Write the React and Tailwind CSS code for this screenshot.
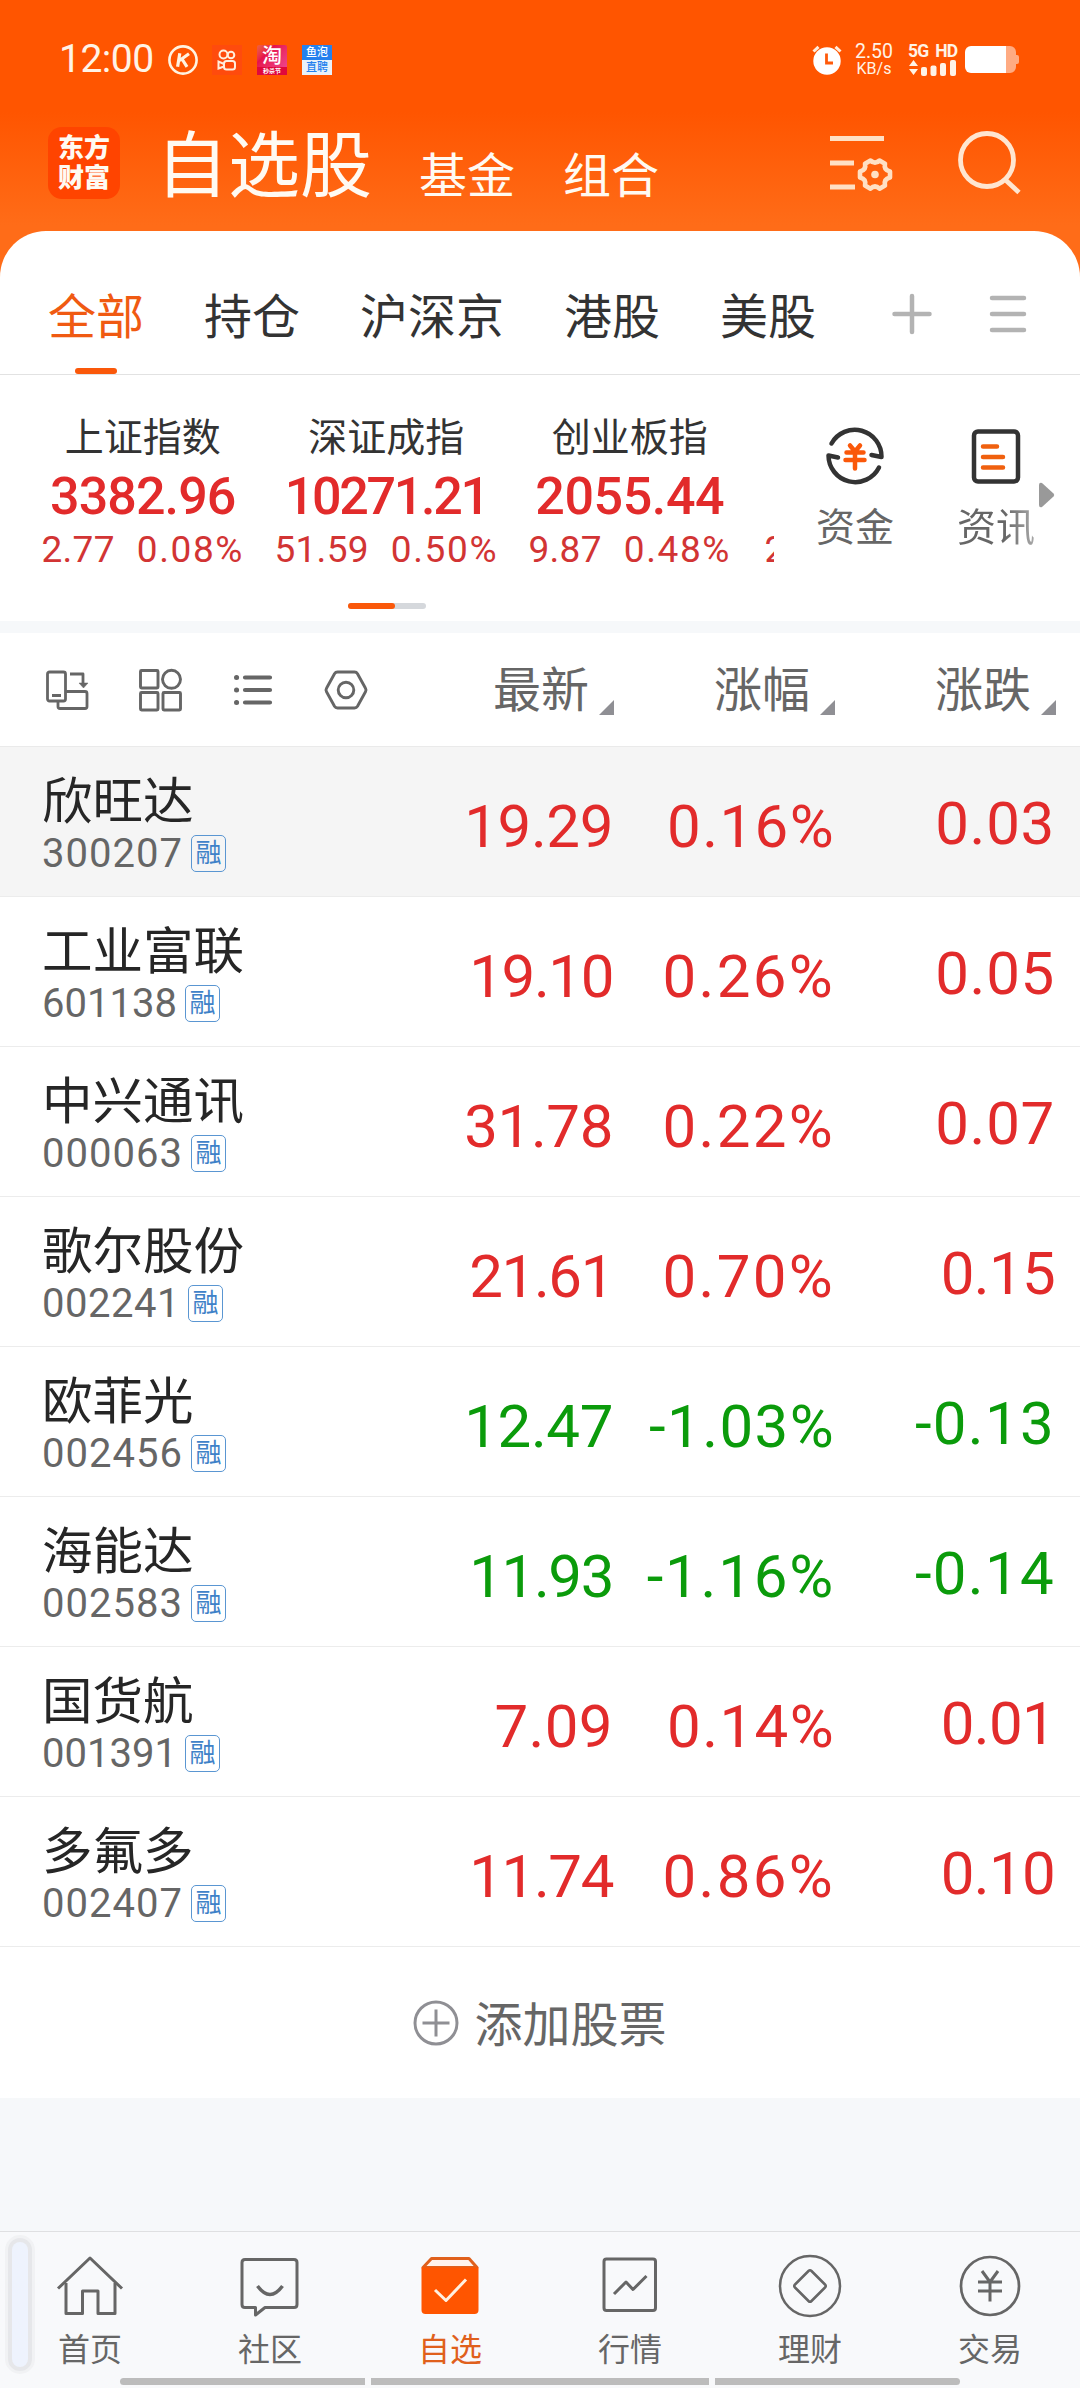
const RED = 'text-[#e22b2b]';
const GREEN = 'text-[#0b9b0b]';

const stocks = [
  { name: '欣旺达', code: '300207', price: '19.29', pct: '0.16%', diff: '0.03', active: true },
  { name: '工业富联', code: '601138', price: '19.10', pct: '0.26%', diff: '0.05' },
  { name: '中兴通讯', code: '000063', price: '31.78', pct: '0.22%', diff: '0.07' },
  { name: '歌尔股份', code: '002241', price: '21.61', pct: '0.70%', diff: '0.15' },
  { name: '欧菲光', code: '002456', price: '12.47', pct: '-1.03%', diff: '-0.13', down: true },
  { name: '海能达', code: '002583', price: '11.93', pct: '-1.16%', diff: '-0.14', down: true },
  { name: '国货航', code: '001391', price: '7.09', pct: '0.14%', diff: '0.01' },
  { name: '多氟多', code: '002407', price: '11.74', pct: '0.86%', diff: '0.10' },
];

// Letter spacing by how many narrow "1" digits a figure holds.
const PRICE_TRACKING = ['tracking-[0.4px]', 'tracking-[-0.4px]', 'tracking-[-1.4px]'];
const PCT_TRACKING = ['tracking-[2.3px]', 'tracking-[1.4px]', 'tracking-[1.8px]'];
const DIFF_TRACKING = ['tracking-[0.7px]', 'tracking-[-0.7px]', 'tracking-[-0.7px]'];
const CODE_TRACKING = ['tracking-[1px]', 'tracking-[0.5px]', 'tracking-[0px]'];

const ones = (text) => Math.min(2, text.split('1').length - 1);

const indices = [
  { name: '上证指数', value: '3382.96', diff: '2.77', pct: '0.08%', tracking: 'tracking-[-0.9px]' },
  { name: '深证成指', value: '10271.21', diff: '51.59', pct: '0.50%', tracking: 'tracking-[-2.3px]' },
  { name: '创业板指', value: '2055.44', diff: '9.87', pct: '0.48%', tracking: 'tracking-[-0.4px]' },
];

function StatusBar() {
  return (
    <div className="flex h-[119px] items-center pl-[59px] pr-[61px] text-[#fff3e6]">
      <span className="w-[109px] text-[39px] leading-none tracking-[-0.5px]">12:00</span>
      <svg width="30" height="30" viewBox="0 0 30 30" fill="none" stroke="#fff3e0">
        <circle cx="15" cy="15" r="13.6" strokeWidth="2.6" />
        <path d="M11.800 8.200 9.600 21.800M21 8.800 11.500 15.500M14 14l5 7.800" strokeWidth="3.200" />
      </svg>
      <div className="ml-[14px] flex size-[30px] items-center justify-center bg-[#ff4b0d]">
        <svg width="20" height="22" viewBox="0 0 20 22" fill="none" stroke="#ffeedd" strokeWidth="2">
          <circle cx="6.5" cy="5.5" r="4" />
          <circle cx="14" cy="6" r="3.3" />
          <rect x="7" y="12" width="11" height="8.5" rx="2.5" />
          <path d="M7 15 1.5 12.5v7L7 17.5" />
        </svg>
      </div>
      <div className="ml-[15px] flex size-[30px] flex-col items-center rounded-[2px] bg-gradient-to-br from-[#f0603c] via-[#e6124c] via-30% to-[#f0489a] text-white">
        <span className="text-[20px] font-medium leading-[22px]">淘</span>
        <span className="w-[30px] bg-[#e0083c] text-center text-[6px] font-bold leading-[8px]">秒杀节</span>
      </div>
      <div className="ml-[15px] flex size-[30px] flex-col text-center text-[11px] font-medium leading-[15px]">
        <span className="bg-[#2581ee] text-white">鱼泡</span>
        <span className="bg-[#e9f1fa] text-[#2581ee]">直聘</span>
      </div>
      <div className="ml-auto flex items-center">
        <svg width="30" height="30" viewBox="0 0 30 30" fill="none">
          <circle cx="15" cy="16" r="13.7" fill="#fff" />
          <path d="M1.500 6.500 6.500 1.800M28.500 6.500 23.500 1.800" stroke="#ffeedd" strokeWidth="3" />
          <path d="M14.500 8.500v9.500H21" stroke="#ff5a0a" strokeWidth="2.800" />
        </svg>
        <div className="ml-[11px] flex w-[42px] flex-col items-center">
          <span className="text-[19.500px] leading-[18px]">2.50</span>
          <span className="text-[16px] leading-[15px]">KB/s</span>
        </div>
        <div className="ml-[13px] w-[50px]">
          <div className="whitespace-nowrap text-[17.500px] font-bold leading-[15px] tracking-[-0.700px] [word-spacing:3px]">5G HD</div>
          <svg width="50" height="17" viewBox="0 0 50 17" fill="#fff3e6">
            <path d="M5.500 1 10 7H1zM5.500 16 10 10H1z" />
            <rect x="13" y="8" width="6" height="9" rx="2" />
            <rect x="22.500" y="6.500" width="6" height="10.500" rx="2" />
            <rect x="32" y="4" width="6" height="13" rx="2" />
            <rect x="42" y="1" width="6" height="16" rx="2" />
          </svg>
        </div>
        <svg className="ml-[7px]" width="54" height="27" viewBox="0 0 54 27">
          <path d="M41 0h4a6 6 0 0 1 6 6v3h1a2 2 0 0 1 2 2v5a2 2 0 0 1-2 2h-1v3a6 6 0 0 1-6 6h-4z" fill="#ffab82" />
          <path d="M6 0h35v27H6a6 6 0 0 1-6-6V6a6 6 0 0 1 6-6z" fill="#fff" />
        </svg>
      </div>
    </div>
  );
}

function Header() {
  return (
    <div className="flex h-[112px] pl-[48px] pr-[58px] text-[#fffaf2]">
      <div className="mt-[8px] flex size-[72px] flex-col items-center justify-center rounded-[14px] bg-[#ff4400] text-[26px] font-black leading-[30px]">
        <span>东方</span>
        <span>财富</span>
      </div>
      <span className="ml-[36px] mt-[4px] text-[72px] leading-[88px]">自选股</span>
      <span className="ml-[47px] mt-[28px] text-[48px] leading-[60px]">基金</span>
      <span className="ml-[48px] mt-[28px] text-[48px] leading-[60px]">组合</span>
      <svg className="ml-auto mt-[14px]" width="66" height="64" viewBox="0 0 66 64" fill="none" stroke="#ffe0c4" strokeWidth="5">
        <path d="M2 5.500h54M2 30h24M2 54h25" />
        <path d="M42.500 27.500q4.500 4.500 9 0l5.500 3.200q-1.500 6 5 7.800v6q-6.500 1.500-5 8l-5.500 3.200q-4.500-4.500-9 0l-5.500-3.200q1.500-6.500-5-8v-6q6.500-1.800 5-7.800z" strokeWidth="4.600" strokeLinejoin="round" />
        <circle cx="47" cy="41.500" r="3.800" fill="#ffe0c4" stroke="none" />
      </svg>
      <svg className="ml-[62px] mt-[10px]" width="66" height="68" viewBox="0 0 66 68" fill="none" stroke="#ffe6d0" strokeWidth="4.800">
        <circle cx="31" cy="31" r="26.500" />
        <path d="M49 50.500 63 63.500" />
      </svg>
    </div>
  );
}

function Tabs() {
  return (
    <div className="flex h-[144px] items-start border-b border-[#e2e2e2] pl-[48px] text-[48px] leading-[60px] text-[#333]">
      <div className="flex h-[143px] flex-col items-center text-[#f05a12]">
        <span className="mt-[57px]">全部</span>
        <span className="mt-[20px] h-[6px] w-[42px] rounded-full bg-[#fa580a]" />
      </div>
      {['持仓', '沪深京', '港股', '美股'].map((t) => (
        <span key={t} className="ml-[60px] mt-[57px]">{t}</span>
      ))}
      <svg className="ml-[75px] mt-[62px]" width="42" height="42" viewBox="0 0 42 42" stroke="#b3b3b3" strokeWidth="4.500" strokeLinecap="round">
        <path d="M21 3v36M3.500 21h35" />
      </svg>
      <svg className="ml-[54px] mt-[62px]" width="42" height="42" viewBox="0 0 42 42" stroke="#b3b3b3" strokeWidth="4.500" strokeLinecap="round">
        <path d="M5 5h32M5 21h32M5 37h32" />
      </svg>
    </div>
  );
}

function Indices() {
  return (
    <div className="h-[246px]">
      <div className="flex h-[214px]">
        <div className="ml-[21px] flex w-[753px] overflow-hidden">
          {indices.map((i) => (
            <div key={i.name} className="flex w-[243.500px] shrink-0 flex-col items-center whitespace-nowrap">
              <span className="mt-[41px] text-[39px] leading-[44px] text-[#333]">{i.name}</span>
              <span className={`mt-[11px] text-[52px] font-medium leading-[52px] text-[#e22b2b] ${i.tracking}`}>{i.value}</span>
              <span className="mt-[7px] flex gap-[22px] text-[37px] leading-[40px] text-[#d23434]">
                <span className="tracking-[0.300px]">{i.diff}</span>
                <span className="tracking-[1.600px]">{i.pct}</span>
              </span>
            </div>
          ))}
          <span className="ml-[13px] mt-[155px] text-[37px] leading-[40px] text-[#d23434]">2</span>
        </div>
        <div className="flex text-[39px] leading-[44px] text-[#666]">
          <div className="ml-[42px] mt-[48px] flex w-[78px] flex-col items-center">
            <svg width="66" height="66" viewBox="0 0 66 66" fill="none" stroke="#333" strokeWidth="4.500" strokeLinecap="round" strokeLinejoin="round">
              <path d="M9.500 20.500A26.700 26.700 0 0 1 59.500 34l-10-2" />
              <path d="M57 44.500A26.700 26.700 0 0 1 6.500 32.500l9.500 2" />
              <path d="m28 22.500 5 6 5-6M24.500 29.500h17M23.500 37h19M33 29.500v16" stroke="#fa580a" />
            </svg>
            <span className="mt-[17px]">资金</span>
          </div>
          <div className="ml-[63px] mt-[48px] flex w-[78px] flex-col items-center">
            <svg width="66" height="66" viewBox="0 0 66 66" fill="none" strokeLinecap="round">
              <rect x="11" y="8.500" width="44" height="50" rx="4" stroke="#333" strokeWidth="4.500" />
              <path d="M20 23.500h14M20 34h20M20 44.500h20" stroke="#f0600e" strokeWidth="4.500" />
            </svg>
            <span className="mt-[17px] bg-gradient-to-r from-[#666] from-60% to-[#aaa] bg-clip-text text-transparent">资讯</span>
          </div>
          <svg className="ml-[4px] mt-[107px]" width="16" height="26" viewBox="0 0 16 26" fill="#999">
            <path d="M0 3q0-3 3-2l11.500 10.500q1.500 1.500 0 3L3 25q-3 1-3-2z" />
          </svg>
        </div>
      </div>
      <div className="ml-[348px] mt-[14px] flex h-[6px] w-[78px] rounded-full bg-[#d5d8dc]">
        <span className="w-[47px] rounded-full bg-[#fa580a]" />
      </div>
    </div>
  );
}

function SortLabel({ children, className }) {
  return (
    <div className={`flex justify-end ${className}`}>
      <span className="mt-[3px] leading-[60px]">{children}</span>
      <svg className="ml-[10px] mt-[42px]" width="15" height="15" viewBox="0 0 15 15" fill="#8f8f94">
        <path d="M15 0v15H0z" />
      </svg>
    </div>
  );
}

function TableHeader() {
  return (
    <div className="flex h-[114px] items-center border-b border-[#eaeaea] pl-[43px] text-[48px] text-[#666]">
      <svg width="48" height="48" viewBox="0 0 48 48" fill="none" stroke="#666" strokeWidth="2.800" strokeLinejoin="round">
        <rect x="4.500" y="6" width="18" height="29" rx="2" />
        <path d="M9 29.500h9M22.500 25.500h19.500q2 0 2 2v13q0 2-2 2H17q-2 0-2-2v-5.500M27 8h13v11" />
        <path d="M36 17h9l-4.500 5z" fill="#666" strokeWidth="0.500" />
      </svg>
      <svg className="ml-[45px]" width="48" height="48" viewBox="0 0 48 48" fill="none" stroke="#666" strokeWidth="2.900">
        <rect x="4.500" y="4.500" width="17.500" height="17.500" rx="1" />
        <circle cx="35.500" cy="13.300" r="9" />
        <rect x="4.500" y="26.500" width="17.500" height="17.500" rx="1" />
        <rect x="27" y="26.500" width="17.500" height="17.500" rx="1" />
      </svg>
      <svg className="ml-[45px]" width="48" height="48" viewBox="0 0 48 48" fill="none" stroke="#666" strokeWidth="4.200" strokeLinecap="round">
        <path d="M16 11.500h25M16 24h25M16 36.500h25" />
        <path d="M7.500 11.500h.1M7.500 24h.1M7.500 36.500h.1" strokeWidth="5" />
      </svg>
      <svg className="ml-[45px]" width="48" height="48" viewBox="0 0 48 48" fill="none" stroke="#666" strokeWidth="2.900">
        <path d="M15.500 6h17q2 0 3 1.700l8 14.600q1 1.700 0 3.400l-8 14.600q-1 1.700-3 1.700h-17q-2 0-3-1.700l-8-14.600q-1-1.700 0-3.400l8-14.600q1-1.700 3-1.700z" />
        <circle cx="24" cy="24" r="7.800" />
      </svg>
      <SortLabel className="w-[244px]">最新</SortLabel>
      <SortLabel className="w-[221px]">涨幅</SortLabel>
      <SortLabel className="w-[221px]">涨跌</SortLabel>
    </div>
  );
}

function StockRow({ s }) {
  return (
    <div className={`flex h-[150px] border-b border-[#ececec] pl-[42px] ${s.active ? 'bg-[#f5f5f5]' : 'bg-white'}`}>
      <div className="w-[290px]">
        <div className="mt-[26px] text-[50.500px] leading-[58px] text-[#262626]">{s.name}</div>
        <div className="mt-[2px] flex h-[40px] items-center">
          <span className={`mt-[2px] text-[40px] leading-[40px] text-[#666] ${CODE_TRACKING[ones(s.code)]}`}>{s.code}</span>
          <span className="ml-[8px] flex h-[37px] w-[35px] items-center justify-center rounded-[5px] border-[1.500px] border-[#5a96d2] text-[26px] leading-none text-[#3f82c8]">融</span>
        </div>
      </div>
      <div className={`flex text-right text-[60px] leading-[60px] ${s.down ? GREEN : RED}`}>
        <span className={`mt-[50px] w-[281px] ${PRICE_TRACKING[ones(s.price)]}`}>{s.price}</span>
        <span className={`-mr-[1px] mt-[50px] w-[222px] ${PCT_TRACKING[ones(s.pct)]}`}>{s.pct}</span>
        <span className={`mt-[47px] w-[221px] ${s.down ? 'tracking-[1.300px]' : DIFF_TRACKING[ones(s.diff)]}`}>{s.diff}</span>
      </div>
    </div>
  );
}

function NavItem({ label, active, children }) {
  return (
    <div className={`flex w-[180px] flex-col items-center ${active ? 'text-[#e0601c]' : 'text-[#666]'}`}>
      <svg className="mt-[18px]" width="72" height="72" viewBox="0 0 72 72" fill="none" stroke={active ? '#e0601c' : '#666'} strokeWidth="3" strokeLinejoin="round">
        {children}
      </svg>
      <span className="mt-[8px] text-[32px] leading-[40px]">{label}</span>
    </div>
  );
}

function BottomNav() {
  return (
    <div className="relative h-[157px] border-t border-[#dfe0e2] bg-[#f8f9fb]">
      <div className="flex">
        <NavItem label="首页">
          <path d="M4 38.500 36 8l32 30.500" />
          <path d="M12 33v30.500h16.500V41h15.500v22.500h17V33" />
        </NavItem>
        <NavItem label="社区">
          <path d="M11 9.500h49q3 0 3 3v42q0 3-3 3H31L21.500 65V57.500H11q-3 0-3-3v-42q0-3 3-3z" />
          <path d="M23.500 36q12.500 17 25 0" strokeWidth="3.500" />
        </NavItem>
        <NavItem label="自选" active>
          <path d="M17.500 8.500H55L63 17.500H9z" fill="#fff3ec" />
          <path d="M7.500 17.500h57V60q0 4-4 4h-49q-4 0-4-4z" fill="#ff5500" stroke="none" />
          <path d="m21 40 11 10.500L52 29.500" stroke="#fff0e0" />
        </NavItem>
        <NavItem label="行情">
          <rect x="10" y="9" width="51.500" height="51.500" rx="2.500" />
          <path d="m20 44 12-12 7 7.500L52.500 26" />
        </NavItem>
        <NavItem label="理财">
          <circle cx="36" cy="36" r="30" strokeWidth="2.500" />
          <path d="M34.500 21q1.500-1.500 3 0L51 34.500q1.500 1.500 0 3L37.500 51q-1.500 1.500-3 0L21 37.500q-1.500-1.500 0-3z" strokeWidth="2.500" />
        </NavItem>
        <NavItem label="交易">
          <circle cx="36" cy="36" r="29" strokeWidth="2.700" />
          <path d="m28 21 8 11 8-11M24 32h24M24 41h24M36 32v19.500" />
        </NavItem>
      </div>
      <div className="mt-[8px] flex gap-[6px] pl-[120px]">
        <span className="h-[7px] w-[245px] rounded-l-full bg-[#bcbcbc]" />
        <span className="h-[7px] w-[338px] bg-[#bcbcbc]" />
        <span className="h-[7px] w-[245px] rounded-r-full bg-[#bcbcbc]" />
      </div>
      <div className="absolute left-[5px] top-[3px] h-[139px] w-[30px] rounded-full border-[3px] border-[#f1f2f4] bg-[#e6e7ea] p-[4px]">
        <div className="h-full rounded-full bg-[#eef3fd]" />
      </div>
    </div>
  );
}

export default function App() {
  return (
    <div className="flex h-[2388px] w-[1080px] flex-col overflow-hidden bg-[#f6f8fa] font-[Roboto,'Noto_Sans_CJK_SC',sans-serif]">
      <div className="h-[277px] bg-[linear-gradient(#ff5500_0px,#ff5500_112px,#ff6c18_225px,#ff6c18_277px)]">
        <StatusBar />
        <Header />
      </div>
      <div className="-mt-[46px] overflow-hidden rounded-t-[46px] bg-white">
        <Tabs />
        <Indices />
      </div>
      <div className="mt-[12px] bg-white">
        <TableHeader />
        {stocks.map((s) => (
          <StockRow key={s.code} s={s} />
        ))}
        <div className="flex h-[151px] items-center justify-center gap-[15px] text-[48px] leading-none text-[#666]">
          <svg width="46" height="46" viewBox="0 0 46 46" fill="none" stroke="#8f8f94" strokeWidth="3">
            <circle cx="23" cy="23" r="21" />
            <path d="M23 9.500v27M9.500 23h27" />
          </svg>
          <span className="pt-[6px]">添加股票</span>
        </div>
      </div>
      <div className="grow" />
      <BottomNav />
    </div>
  );
}
